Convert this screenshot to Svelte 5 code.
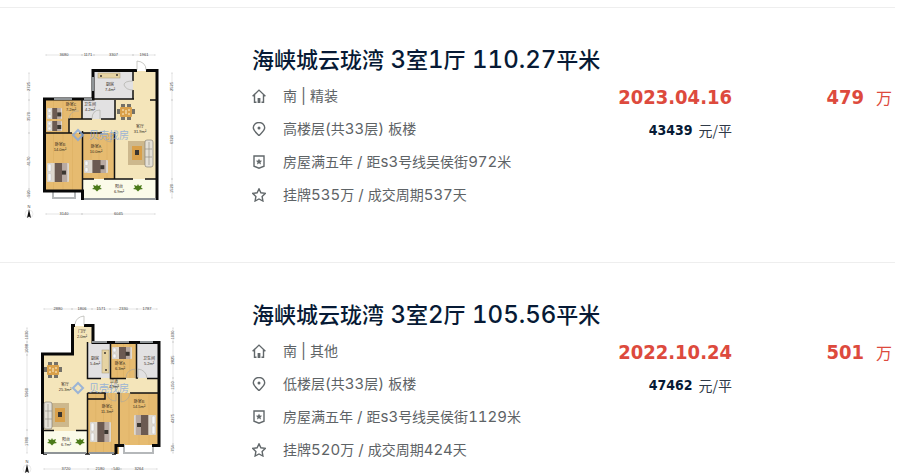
<script lang="ts">
	type IconName = 'house' | 'pin' | 'badge' | 'star';
	type Fill = 'wood' | 'cream' | 'tile' | 'balcony';

	interface Plan {
		rooms: { x: number; y: number; w: number; h: number; fill: Fill }[];
		walls: string;
		inner: string;
		windows: string;
		doors: string;
		bay: string;
		beds: { x: number; y: number; w: number; h: number; flip?: boolean }[];
		table: [number, number];
		sofa: { x: number; y: number; flip?: boolean };
		plants: [number, number][];
		counter: { x: number; y: number; w: number; h: number };
		labels: { x: number; y: number; name: string; area: string }[];
		across: { y: number; stops: number[]; values: string[] }[];
		down: { x: number; stops: number[]; values: string[] }[];
		mark: [number, number];
		compass: [number, number];
	}

	interface Listing {
		title: string;
		facts: { icon: IconName; text: string }[];
		date: string;
		unitPrice: string;
		total: string;
		plan: Plan;
	}

	const listings: Listing[] = [
		{
			title: '海峡城云珑湾 3室1厅 110.27平米',
			facts: [
				{ icon: 'house', text: '南 | 精装' },
				{ icon: 'pin', text: '高楼层(共33层) 板楼' },
				{ icon: 'badge', text: '房屋满五年 / 距s3号线吴侯街972米' },
				{ icon: 'star', text: '挂牌535万 / 成交周期537天' }
			],
			date: '2023.04.16',
			unitPrice: '43439',
			total: '479',
			plan: {
				rooms: [
					{ x: 59, y: 59, w: 88, h: 80, fill: 'cream' },
					{ x: 123, y: 31, w: 24, h: 30, fill: 'cream' },
					{ x: 83, y: 31, w: 40, h: 28, fill: 'tile' },
					{ x: 73, y: 60, w: 32, h: 19, fill: 'tile' },
					{ x: 34, y: 59, w: 38, h: 20, fill: 'wood' },
					{ x: 34, y: 79, w: 25, h: 14, fill: 'wood' },
					{ x: 34, y: 93, w: 38, h: 58, fill: 'wood' },
					{ x: 73, y: 93, w: 32, h: 46, fill: 'wood' },
					{ x: 73, y: 139, w: 74, h: 20, fill: 'balcony' }
				],
				walls: 'M127 30.5H83V59H34.500V151H72.500V160M136 30.500H147V160',
				inner: 'M83 59H124M72 59V79H59V92.500M34 93H62M69 93H92M72.500 91V151M104.500 92V139M105 60V79H91M82 79H72M73 139H84M94 139H123M135 139H147M123 32V41M123 50V59.500M140 60H147',
				windows: 'M44 59H62M83 37V51M74 59H82M74 159H146',
				doors: 'M127 30V21Q136 22 136 30M123 41Q114 41 114 45Q116 50 123 50M82 79Q82 70 90 70V79M59 79Q60 70 69 71M92 93Q92 101 101 102V93',
				bay: 'M43 150V158H65V150',
				beds: [
					{ x: 37, y: 68, w: 15, h: 11 },
					{ x: 37, y: 81, w: 15, h: 10 },
					{ x: 37, y: 123, w: 22, h: 19 },
					{ x: 74, y: 120, w: 24, h: 13 }
				],
				table: [116, 72],
				sofa: { x: 119, y: 101 },
				plants: [[87, 148], [128, 148]],
				counter: { x: 88, y: 33, w: 22, h: 5 },
				labels: [
					{ x: 100, y: 46, name: '厨房', area: '7.4m²' },
					{ x: 61, y: 66, name: '卧室C', area: '7.2m²' },
					{ x: 80, y: 66, name: '卫生间', area: '4.2m²' },
					{ x: 130, y: 88, name: '客厅', area: '31.9m²' },
					{ x: 50, y: 106, name: '卧室B', area: '14.0m²' },
					{ x: 86, y: 108, name: '卧室A', area: '10.0m²' },
					{ x: 109, y: 148, name: '阳台', area: '6.9m²' }
				],
				across: [
					{ y: 15, stops: [36, 72, 84, 123, 145], values: ['3680', '1171', '3307', '1961'] },
					{ y: 174, stops: [36, 72, 145], values: ['3140', '6045'] }
				],
				down: [
					{ x: 19, stops: [33, 60, 93, 149, 158], values: ['2725', '3570', '4170', '920'] },
					{ x: 162, stops: [33, 60, 139, 158], values: ['2525', '6320', '1520'] }
				],
				mark: [68, 95],
				compass: [19, 172]
			}
		},
		{
			title: '海峡城云珑湾 3室2厅 105.56平米',
			facts: [
				{ icon: 'house', text: '南 | 其他' },
				{ icon: 'pin', text: '低楼层(共33层) 板楼' },
				{ icon: 'badge', text: '房屋满五年 / 距s3号线吴侯街1129米' },
				{ icon: 'star', text: '挂牌520万 / 成交周期424天' }
			],
			date: '2022.10.24',
			unitPrice: '47462',
			total: '501',
			plan: {
				rooms: [
					{ x: 32, y: 59, w: 46, h: 77, fill: 'cream' },
					{ x: 62, y: 31, w: 21, h: 30, fill: 'cream' },
					{ x: 76, y: 83, w: 73, h: 17, fill: 'cream' },
					{ x: 78, y: 48, w: 22, h: 35, fill: 'tile' },
					{ x: 101, y: 48, w: 25, h: 35, fill: 'wood' },
					{ x: 127, y: 48, w: 22, h: 35, fill: 'tile' },
					{ x: 78, y: 98, w: 31, h: 61, fill: 'wood' },
					{ x: 109, y: 98, w: 40, h: 52, fill: 'wood' },
					{ x: 32, y: 136, w: 46, h: 22, fill: 'balcony' }
				],
				walls: 'M65 30.500H62.500V59H32.500V159M74 30.500H83V47.500H149V150.500H142M114 150.500H106V159',
				inner: 'M77.500 47V83.500H91M100.500 48V83.500H116M126.500 48V83H128M137 83.500H149M77.500 98H96M95 98V104H78M77.500 98V159M107 98H110M120 98H149M109 98V150M33 135.500H44M66 135.500H78M33 159H37M75 159H80M102 159H106',
				windows: 'M82 47H97M105 47H119M130 47H143M34 158H76M79 158H104',
				doors: 'M74 30V21Q66 22 65 29M116 83Q116 75 125 74V83M128 83V74Q136 75 137 83M97 98Q98 106 106 106V98M111 98V107Q119 106 120 98',
				bay: 'M114 149V158H143V149',
				beds: [
					{ x: 102, y: 52, w: 20, h: 12 },
					{ x: 80, y: 127, w: 21, h: 20 },
					{ x: 124, y: 120, w: 22, h: 20, flip: true }
				],
				table: [43, 75],
				sofa: { x: 37, y: 108, flip: true },
				plants: [[42, 147], [70, 147]],
				counter: { x: 92, y: 55, w: 7, h: 23 },
				labels: [
					{ x: 72, y: 38, name: '门厅', area: '2.0m²' },
					{ x: 85, y: 65, name: '厨房', area: '5.4m²' },
					{ x: 110, y: 70, name: '卧室A', area: '6.3m²' },
					{ x: 139, y: 65, name: '卫生间', area: '5.2m²' },
					{ x: 55, y: 91, name: '客厅', area: '25.3m²' },
					{ x: 104, y: 88, name: '过道', area: '4.9m²' },
					{ x: 97, y: 113, name: '卧室C', area: '11.3m²' },
					{ x: 129, y: 108, name: '卧室B', area: '14.5m²' },
					{ x: 56, y: 146, name: '阳台', area: '6.7m²' }
				],
				across: [
					{ y: 14, stops: [34, 62, 82, 100, 127, 147], values: ['2880', '1806', '1571', '2330', '1787'] },
					{ y: 174, stops: [34, 78, 102, 111, 147], values: ['3720', '2180', '540', '3264'] }
				],
				down: [
					{ x: 17, stops: [33, 47, 60, 135, 158], values: ['1030', '1088', '5960', '1780'] },
					{ x: 163, stops: [33, 47, 83, 98, 149, 158], values: ['1030', '2825', '1150', '4275', '754'] }
				],
				mark: [68, 93],
				compass: [17, 172]
			}
		}
	];

	// Latin runs use their own face next to the Chinese characters
	function runs(text: string) {
		return text.match(/[\x20-\x7e]+|[^\x20-\x7e]+/g) ?? [];
	}

	function isLatin(run: string) {
		return /^[\x20-\x7e]/.test(run);
	}
</script>

{#snippet mixed(text: string)}
	{#each runs(text) as run}{#if isLatin(run)}<span class="latin">{run}</span>{:else}{run}{/if}{/each}
{/snippet}

{#snippet icon(name: IconName)}
	<svg class="icon" viewBox="0 0 14 14" aria-hidden="true">
		{#if name === 'house'}
			<path d="M.6 7.300 7 1.100l6.400 6.200M2.500 6v7.300h2M11.500 6v7.300h-2" />
			<path class="solid" d="M5.600 9h2.800v5H5.600Z" />
		{:else if name === 'pin'}
			<path d="M7 13.600C4 10.600 1.300 8.500 1.300 5.800a5.700 5.300 0 0 1 11.400 0C12.700 8.500 10 10.600 7 13.600Z" />
			<circle class="solid" cx="7" cy="6" r="1.500" />
		{:else if name === 'badge'}
			<path d="M2 1h10v10.200L7 13.200l-5-2Z" />
			<path class="solid" d="m7 3.500.9 2 2.200.2-1.600 1.500.5 2.200-2-1.200-2 1.200.5-2.200-1.600-1.500 2.200-.2Z" />
		{:else}
			<path d="m7 .9 1.900 3.900 4.400.6-3.200 3 .8 4.600L7 11l-3.900 2 .8-4.600-3.200-3 4.400-.6Z" />
		{/if}
	</svg>
{/snippet}

{#snippet floorPlan(plan: Plan)}
	<svg class="plan" viewBox="0 0 180 180" aria-hidden="true">
		{#each plan.rooms as room}
			<rect class={room.fill} x={room.x} y={room.y} width={room.w} height={room.h} />
			{#if room.fill === 'wood'}
				{#each [0.25, 0.5, 0.75] as part}
					<path class="grain" d="M{room.x + room.w * part} {room.y}v{room.h}" />
				{/each}
			{/if}
		{/each}
		<path class="bay" d={plan.bay} />
		<path class="wall" d={plan.walls} />
		<path class="partition" d={plan.inner} />
		<path class="window" d={plan.windows} />
		<path class="door" d={plan.doors} />

		{#each plan.beds as bed}
			<g transform="translate({bed.flip ? bed.x + bed.w : bed.x} {bed.y}) scale({bed.flip ? -1 : 1} 1)">
				<rect class="sheet" width={bed.w} height={bed.h} rx="1" />
				<rect class="pillow" x="1" y="1" width="3" height={bed.h / 2 - 2} rx="1" />
				<rect class="pillow" x="1" y={bed.h / 2 + 1} width="3" height={bed.h / 2 - 2} rx="1" />
				<rect class="blanket" x={bed.w * 0.35} width={bed.w * 0.35} height={bed.h} />
				<rect class="runner" x={bed.w * 0.7} width={bed.w * 0.22} height={bed.h} />
				<rect class="dark" x={bed.w * 0.68} y={bed.h * 0.4} width="4" height="4" />
			</g>
		{/each}

		<g transform="translate({plan.table[0]} {plan.table[1]})">
			<path class="chair" d="M-5-8H-1V-5H-5ZM1-8H5V-5H1ZM-5 5H-1V8H-5ZM1 5H5V8H1ZM-9-3h3v5h-3ZM6-3h3v5H6Z" />
			<rect class="board" x="-6" y="-5" width="12" height="10" rx="1" />
			<path class="plates" d="M-4-2h2M2-2h2M-4 2h2M2 2h2M0-2v4" />
		</g>

		<g transform="translate({plan.sofa.flip ? plan.sofa.x + 21 : plan.sofa.x} {plan.sofa.y}) scale({plan.sofa.flip ? -1 : 1} 1)">
			<rect class="rug" x="-1" y="0" width="22" height="24" />
			<rect class="board" x="3" y="5" width="10" height="14" />
			<rect class="dark" x="6" y="9" width="4" height="5" />
			<rect class="couch" x="16" y="-1" width="8" height="27" rx="2" />
			<path class="seams" d="M20 1v23M16 8h7M16 16h7" />
		</g>

		<rect class="counter" x={plan.counter.x} y={plan.counter.y} width={plan.counter.w} height={plan.counter.h} />
		<circle class="dark" cx={plan.counter.x + 3} cy={plan.counter.y + 3} r="1" />
		<circle class="dark" cx={plan.counter.x + plan.counter.w - 3} cy={plan.counter.y + plan.counter.h - 3} r="1" />

		{#each plan.plants as [x, y]}
			<path class="plant" d="m{x} {y - 4} 1 2 3-1-1 2.500 2 1.500-3 .5-2 2-2-2-3-.5 2-1.500-1-2.500 3 1Z" />
		{/each}

		<g transform="translate({plan.mark[0]} {plan.mark[1]})">
			<path class="logo" d="M-5 0 0-5l5 5-5 5Z" />
			<text class="brand" x="11" y="4">贝壳找房</text>
		</g>

		{#each plan.labels as label}
			<text class="label" x={label.x} y={label.y}>{label.name}</text>
			<text class="label area" x={label.x} y={label.y + 5}>{label.area}</text>
		{/each}

		{#each plan.across as rule}
			{#each rule.values as value, i}
				{@const from = rule.stops[i]}
				{@const to = rule.stops[i + 1]}
				<path class="rule" d="M{from} {rule.y}H{to}M{from} {rule.y - 1}v2M{to} {rule.y - 1}v2" />
				<text class="measure" x={(from + to) / 2} y={rule.y + 1}>{value}</text>
			{/each}
		{/each}
		{#each plan.down as rule}
			{#each rule.values as value, i}
				{@const from = rule.stops[i]}
				{@const to = rule.stops[i + 1]}
				<g transform="translate({rule.x} {(from + to) / 2}) rotate(-90)">
					<path class="rule" d="M{(from - to) / 2} 0H{(to - from) / 2}M{(from - to) / 2}-1v2M{(to - from) / 2}-1v2" />
					<text class="measure" y="1">{value}</text>
				</g>
			{/each}
		{/each}

		<g transform="translate({plan.compass[0]} {plan.compass[1]})">
			<circle class="dial" cy="2" r="4" />
			<path class="needle" d="M0-3 2 6 0 4.500-2 6Z" />
			<text class="measure" y="-4">N</text>
		</g>
	</svg>
{/snippet}

<main class="listings">
	{#each listings as listing}
		<article class="listing">
			{@render floorPlan(listing.plan)}
			<div class="details">
				<h2>{@render mixed(listing.title)}</h2>
				<ul>
					{#each listing.facts as fact}
						<li>
							{@render icon(fact.icon)}
							<span>{@render mixed(fact.text)}</span>
						</li>
					{/each}
				</ul>
			</div>
			<div class="deal">
				<time class="figure" datetime={listing.date.replaceAll('.', '-')}>{listing.date}</time>
				<p class="unit-price"><strong>{listing.unitPrice}</strong><span>元/平</span></p>
			</div>
			<p class="total"><strong class="figure">{listing.total}</strong><span>万</span></p>
		</article>
	{/each}
</main>

<style>
	:global(body) {
		margin: 0;
		background: #fff;
	}

	.listings {
		margin: 7px 24px 0 0;
		color: #5e6366;
		font-family: 'Noto Sans CJK SC', sans-serif;
		font-size: 14px;
	}

	.listing {
		display: grid;
		grid-template-columns: 180px minmax(0, 1fr) 120px 120px;
		column-gap: 40px;
		padding: 32px 3px 42px 10px;
		border-top: 1px solid #eee;
	}

	.listing:last-child {
		padding-bottom: 0;
	}

	.plan {
		width: 180px;
		height: 180px;
	}

	.details {
		margin: 2px 0 0 22px;
		white-space: nowrap;
	}

	h2 {
		margin: 0;
		color: #071a35;
		font-size: 22px;
		font-weight: 500;
		line-height: 32px;
	}

	.latin {
		font-family: Inter, 'Noto Sans CJK SC', sans-serif;
		font-size: 15px;
		font-variant-numeric: tabular-nums;
		line-height: 1;
		white-space: pre;
	}

	h2 .latin {
		font-size: 24px;
	}

	ul {
		display: grid;
		gap: 2px;
		margin: 6px 0 0;
		padding: 0;
		list-style: none;
	}

	li {
		display: flex;
		align-items: center;
		gap: 17px;
		height: 31px;
		line-height: 31px;
	}

	.icon {
		flex: none;
		width: 14px;
		height: 14px;
		fill: none;
		stroke: #62686b;
		stroke-width: 1.4;
	}

	.icon .solid {
		fill: #62686b;
		stroke: none;
	}

	.deal {
		margin-top: 43px;
		text-align: right;
		white-space: nowrap;
	}

	.figure {
		display: block;
		color: #dd4a3d;
		font-family: 'DejaVu Sans Condensed', 'DejaVu Sans', sans-serif;
		font-size: 20px;
		font-weight: 700;
		line-height: 28px;
	}

	.unit-price {
		display: flex;
		justify-content: flex-end;
		gap: 6px;
		margin: 8px 0 0;
		color: #303a48;
		line-height: 22px;
	}

	.unit-price strong {
		color: #071a35;
		font-family: 'DejaVu Sans Condensed', 'DejaVu Sans', sans-serif;
		font-weight: 700;
	}

	.total {
		display: flex;
		justify-content: flex-end;
		gap: 12px;
		margin: 43px 0 0;
		color: #dd4a3d;
		font-size: 16px;
		line-height: 28px;
	}

	.wood {
		fill: #e6bb70;
	}

	.grain {
		stroke: #d6aa5c;
		stroke-width: 0.4;
	}

	.cream {
		fill: #f4e5ba;
	}

	.tile {
		fill: #e2e1e2;
	}

	.balcony {
		fill: #fbfbe9;
	}

	.wall,
	.partition,
	.window,
	.door,
	.bay,
	.rule {
		fill: none;
	}

	.wall {
		stroke: #080808;
		stroke-width: 3;
	}

	.partition {
		stroke: #111;
		stroke-width: 1.5;
	}

	.window {
		stroke: #8f9497;
		stroke-width: 2;
	}

	.door {
		stroke: #a6a6a0;
		stroke-width: 0.6;
	}

	.bay {
		stroke: #b5b8ba;
		stroke-width: 2;
	}

	.sheet {
		fill: #ded8cf;
	}

	.pillow {
		fill: #f7f7f5;
		stroke: #b5b9bc;
		stroke-width: 0.4;
	}

	.blanket {
		fill: #6b5a52;
	}

	.runner {
		fill: #b8aaa2;
	}

	.dark {
		fill: #3b3630;
	}

	.chair {
		fill: #747168;
	}

	.board {
		fill: #d9a04a;
	}

	.plates {
		stroke: #fff1cf;
	}

	.rug {
		fill: #cdb88d;
	}

	.couch {
		fill: #e4e0d6;
		stroke: #77746c;
		stroke-width: 0.6;
	}

	.seams {
		fill: none;
		stroke: #8c887e;
		stroke-width: 0.6;
	}

	.counter {
		fill: #e6d3a2;
		stroke: #a79871;
		stroke-width: 0.5;
	}

	.plant {
		fill: #4b7a19;
	}

	.logo {
		fill: none;
		stroke: #85a8dc;
		stroke-width: 2;
		opacity: 0.8;
	}

	.brand {
		fill: #85a8dc;
		font-size: 10px;
		opacity: 0.8;
	}

	.label,
	.measure {
		font-size: 4px;
		text-anchor: middle;
	}

	.label {
		fill: #33291a;
	}

	.area,
	.measure {
		font-family: 'Liberation Sans', sans-serif;
	}

	.measure {
		fill: #444;
	}

	.rule {
		stroke: #bbb;
		stroke-width: 0.4;
	}

	.dial {
		fill: #fff;
		stroke: #ccc;
		stroke-width: 0.4;
	}

	.needle {
		fill: #111;
	}
</style>
